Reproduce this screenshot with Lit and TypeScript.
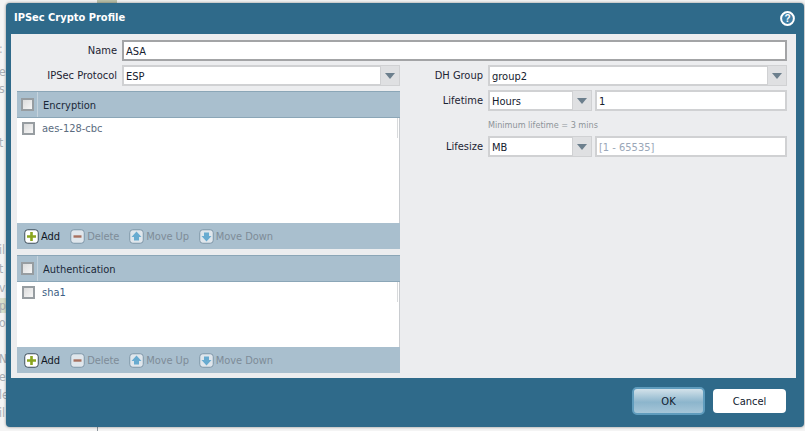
import { LitElement, html, css, svg } from "lit";
import { customElement } from "lit/decorators.js";

const scraps: [string, number][] = [
  [":", 42], ["er", 65], ["s", 82], ["t", 136], ["il", 243], ["t", 262], ["va", 281], ["p", 299], ["o", 316],
  ["N", 352], ["e", 370], ["le", 388], ["il", 406],
];

const ICONS: Record<string, unknown> = {
  add: svg`<path d="M7.5 3v9M3 7.5h9" stroke="#8aa51f" stroke-width="2.6" fill="none"/>`,
  del: svg`<path d="M3.5 7.5h8" stroke="#a8705f" stroke-width="2.4" fill="none"/>`,
  up: svg`<path d="M7.5 2.5 12.5 8H10v3.5H5V8H2.5z" fill="#68abd0"/>`,
  down: svg`<path d="M7.5 12.5 12.5 7H10V3.5H5V7H2.5z" fill="#68abd0"/>`,
};

@customElement("app-root")
export class AppRoot extends LitElement {
  static styles = css`
    :host {
      display: block;
      position: relative;
      width: 805px;
      height: 431px;
      overflow: hidden;
      background: #f4f4f4;
      font-family: "DejaVu Sans", "Noto Sans", sans-serif;
      font-stretch: condensed;
      font-size: 11px;
      color: #1c2433;
    }
    .scrap { position: absolute; left: -1px; font-size: 12px; color: #a9aeb3; line-height: 14px; }
    .tint { position: absolute; left: 0; top: 298px; width: 6px; height: 15px; background: #d9dfcb; }
    .topstrip { position: absolute; left: 97px; top: 0; width: 20px; height: 3px; background: #b9bfa8; }
    .vline { position: absolute; left: 97px; top: 425px; width: 1px; height: 6px; background: #8b959c; }
    .dialog {
      position: absolute;
      left: 6px;
      top: 3px;
      width: 798px;
      height: 424px;
      box-sizing: border-box;
      background: #2f6a8a;
      border-radius: 4px;
      box-shadow: 0 0 3px rgba(0, 0, 0, 0.45);
      display: flex;
      flex-direction: column;
    }
    .title {
      height: 31px;
      flex: none;
      display: flex;
      align-items: center;
      justify-content: space-between;
      padding: 0 9px 3px 8px;
      box-sizing: border-box;
      color: #fff;
      font-weight: 700;
      font-size: 11px;
    }
    .help { width: 15px; height: 15px; display: block; margin-top: 2px; }
    .body {
      height: 344px;
      flex: none;
      margin: 0 8px 0 5px;
      box-sizing: border-box;
      background: #ecedef;
      padding: 6px 9px 0 6px;
      display: flex;
      flex-direction: column;
      align-items: stretch;
    }
    .row { display: flex; align-items: center; height: 21px; }
    .gapped { margin-bottom: 5px; }
    .label { text-align: right; flex: none; padding-right: 5px; box-sizing: border-box; }
    .l-left { width: 105px; }
    .l-right { width: 80px; }
    .input {
      flex: 1;
      min-width: 0;
      height: 21px;
      box-sizing: border-box;
      border: 2px solid #d0d1d3;
      background: #fff;
      padding: 1px 2px 0;
      display: flex;
      align-items: center;
      color: #15202e;
      white-space: nowrap;
    }
    .input.strong { border-color: #a3a4a6; }
    .input.ph { color: #9aa7b8; }
    .select { flex: 1; min-width: 0; height: 21px; display: flex; }
    .select .input { border-right: none; }
    .arrow {
      width: 20px;
      flex: none;
      box-sizing: border-box;
      border: 1px solid #d0d1d3;
      background: #dfe0e2;
      display: flex;
      align-items: center;
      justify-content: center;
    }
    .arrow i {
      width: 0;
      height: 0;
      border-left: 5.5px solid transparent;
      border-right: 5.5px solid transparent;
      border-top: 6px solid #6c7f8d;
    }
    .columns { display: flex; gap: 8px; margin-top: 4px; flex: 1; min-height: 0; }
    .left { width: 383px; flex: none; display: flex; flex-direction: column; }
    .right { flex: 1; min-width: 0; display: flex; flex-direction: column; }
    .right .row + .row { margin-top: 4px; }
    .pair { flex: 1; min-width: 0; display: flex; gap: 3px; }
    .pair .select { flex: none; width: 104px; }
    .hint { height: 25px; padding: 8px 0 0 80px; box-sizing: border-box; font-size: 9px; line-height: 13px; color: #8d9499; }
    .panel { display: flex; flex-direction: column; background: #fff; border-right: 1px solid #c9ccd0; }
    .panel.enc { height: 158px; }
    .panel.auth { height: 118px; margin-top: 6px; }
    .head {
      height: 27px;
      flex: none;
      box-sizing: border-box;
      background: #a9bfce;
      border-bottom: 1px solid #8ba6b7;
      border-top: 1px solid #8ba6b7;
      display: flex;
      align-items: center;
      margin-right: -1px;
    }
    .cellbox { width: 21px; flex: none; align-self: stretch; display: flex; align-items: center; justify-content: center; border-right: 1px solid #c5d3dd; box-sizing: border-box; padding-left: 1px; }
    .head .name { padding: 1px 0 0 5px; color: #1a2838; }
    .cb {
      width: 13px;
      height: 13px;
      box-sizing: border-box;
      border: 2px solid #979da1;
      background: linear-gradient(135deg, #dcdcdc, #f6f6f6);
    }
    .list { flex: 1; min-height: 0; }
    .item { height: 20px; display: flex; align-items: center; border-right: 1px solid #d8dadc; margin-right: 1px; }
    .item .cellbox { border-right: none; }
    .item .val { padding-left: 4px; color: #5b6c80; }
    .item .val.sha { color: #3e5f85; }
    .bar {
      height: 26px;
      flex: none;
      background: #a9bfce;
      display: flex;
      align-items: center;
      padding-left: 7px;
      margin-right: -1px;
      color: #7e8c98;
    }
    .tool { display: flex; align-items: center; gap: 2px; margin-right: 10px; letter-spacing: -0.08px; }
    .tool span { padding-top: 1px; }
    .tool svg { width: 15px; height: 15px; display: block; }
    .tool.on { color: #10161f; letter-spacing: 0; }
    .footer { flex: 1; display: flex; justify-content: flex-end; align-items: center; gap: 8px; padding: 0 18px 3px 0; }
    .btn {
      width: 73px;
      height: 24px;
      box-sizing: border-box;
      border-radius: 4px;
      background: #fff;
      display: flex;
      align-items: center;
      justify-content: center;
      color: #10202e;
    }
    .btn.ok {
      height: 28px;
      border: 2px solid #5f9cbd;
      border-radius: 5px;
      background: linear-gradient(#d3e2ea, #8cb5cc 55%, #a6c6d8);
    }
  `;

  private icon(kind: string, on: boolean) {
    const stroke = on ? "#3e4f5c" : "#7e97a8";
    const fill = on ? "#fff" : "#dfe6ec";
    return html`<svg viewBox="0 0 15 15">
      <rect x=".75" y=".75" width="13.5" height="13.5" rx="3" fill=${fill} stroke=${stroke} stroke-width="1"/>
      ${ICONS[kind]}
    </svg>`;
  }

  private tools() {
    return html`<div class="bar">
      <div class="tool on">${this.icon("add", true)}<span>Add</span></div>
      <div class="tool">${this.icon("del", false)}<span>Delete</span></div>
      <div class="tool">${this.icon("up", false)}<span>Move Up</span></div>
      <div class="tool">${this.icon("down", false)}<span>Move Down</span></div>
    </div>`;
  }

  private panel(cls: string, title: string, value: string, valCls: string) {
    return html`<div class="panel ${cls}">
      <div class="head"><div class="cellbox"><div class="cb"></div></div><div class="name">${title}</div></div>
      <div class="list">
        <div class="item"><div class="cellbox"><div class="cb"></div></div><div class="val ${valCls}">${value}</div></div>
      </div>
      ${this.tools()}
    </div>`;
  }

  private select(value: string) {
    return html`<div class="select"><div class="input">${value}</div><div class="arrow"><i></i></div></div>`;
  }

  render() {
    return html`
      <div class="tint"></div>
      ${scraps.map(([t, y]) => html`<div class="scrap" style="top:${y}px">${t}</div>`)}
      <div class="topstrip"></div>
      <div class="vline"></div>
      <div class="dialog">
        <div class="title">
          <span>IPSec Crypto Profile</span>
          <svg class="help" viewBox="0 0 15 15">
            <circle cx="7.5" cy="7.5" r="6.4" fill="#3f7fa6" stroke="#fff" stroke-width="2"/>
            <text x="7.5" y="11" text-anchor="middle" font-size="10" font-weight="700" fill="#fff" font-family="Liberation Sans, sans-serif">?</text>
          </svg>
        </div>
        <div class="body">
          <div class="row">
            <div class="label l-left">Name</div>
            <div class="input strong">ASA</div>
          </div>
          <div class="columns">
            <div class="left">
              <div class="row gapped">
                <div class="label l-left">IPSec Protocol</div>
                ${this.select("ESP")}
              </div>
              ${this.panel("enc", "Encryption", "aes-128-cbc", "")}
              ${this.panel("auth", "Authentication", "sha1", "sha")}
            </div>
            <div class="right">
              <div class="row">
                <div class="label l-right">DH Group</div>
                ${this.select("group2")}
              </div>
              <div class="row">
                <div class="label l-right">Lifetime</div>
                <div class="pair">${this.select("Hours")}<div class="input">1</div></div>
              </div>
              <div class="hint">Minimum lifetime = 3 mins</div>
              <div class="row">
                <div class="label l-right">Lifesize</div>
                <div class="pair">${this.select("MB")}<div class="input ph">[1 - 65535]</div></div>
              </div>
            </div>
          </div>
        </div>
        <div class="footer">
          <div class="btn ok">OK</div>
          <div class="btn">Cancel</div>
        </div>
      </div>
    `;
  }
}
